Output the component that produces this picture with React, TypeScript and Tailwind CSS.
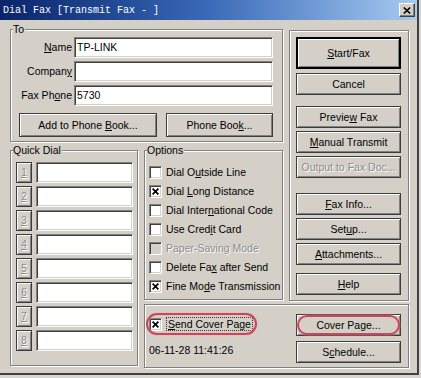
import React from 'react';

type Kids = { children?: React.ReactNode };

function U({ children }: Kids) {
  return <span className="underline underline-offset-[1px] decoration-1">{children}</span>;
}

function Button({
  children,
  className = '',
  disabled = false,
  isDefault = false,
}: Kids & { className?: string; disabled?: boolean; isDefault?: boolean }) {
  return (
    <button
      type="button"
      className={`flex items-center justify-center bg-[#d4d0c8] leading-none shadow-[inset_1px_1px_0_#fff,inset_-1px_-1px_0_#808080] ${
        isDefault ? 'border-2 border-black' : 'border border-[#3c3c3c]'
      } ${disabled ? 'text-[#8a8a8a] [text-shadow:1px_1px_0_#fff]' : 'text-black'} ${className}`}
    >
      <span className="whitespace-pre">{children}</span>
    </button>
  );
}

function Field({ value = '', className = '' }: { value?: string; className?: string }) {
  return (
    <div
      className={`flex h-[21px] items-center bg-white pl-[2px] border border-t-[#808080] border-l-[#808080] border-b-white border-r-white shadow-[inset_1px_1px_0_#404040,inset_-1px_-1px_0_#d4d0c8] ${className}`}
    >
      {value}
    </div>
  );
}

function Group({ label, className = '', children }: Kids & { label?: string; className?: string }) {
  return (
    <div className={`relative border border-[#808080] shadow-[inset_1px_1px_0_#fff,1px_1px_0_#fff] ${className}`}>
      {label && (
        <span className="absolute -top-[7px] left-[2px] bg-[#d4d0c8] pr-px leading-[13px]">{label}</span>
      )}
      {children}
    </div>
  );
}

function Check({ checked = false, disabled = false }: { checked?: boolean; disabled?: boolean }) {
  return (
    <span
      className={`flex h-[13px] w-[13px] shrink-0 items-center justify-center border border-t-[#808080] border-l-[#808080] border-b-white border-r-white shadow-[inset_1px_1px_0_#404040,inset_-1px_-1px_0_#d4d0c8] ${
        disabled ? 'bg-[#d4d0c8]' : 'bg-white'
      }`}
    >
      {checked && (
        <svg width="7" height="7" viewBox="0 0 7 7">
          <path d="M0.6 0.6L6.4 6.4M6.4 0.6L0.6 6.4" stroke="black" strokeWidth="1.7" />
        </svg>
      )}
    </span>
  );
}

const options: { label: React.ReactNode; checked?: boolean; disabled?: boolean }[] = [
  { label: <>Dial O<U>u</U>tside Line</> },
  { label: <>Dial <U>L</U>ong Distance</>, checked: true },
  { label: <>Dial Inter<U>n</U>ational Code</> },
  { label: <>Use Cred<U>i</U>t Card</> },
  { label: <>Paper-Saving Mode</>, disabled: true },
  { label: <>Delete Fa<U>x</U> after Send</> },
  { label: <>Fine Mo<U>d</U>e Transmission</>, checked: true },
];

export default function App() {
  return (
    <div className="h-[378px] w-[421px] bg-[#d8d6d2] font-['Liberation_Sans',Arial,sans-serif] text-[10.5px] leading-[13px] text-black">
      <div className="flex h-[375px] w-[419px] flex-col border-r-2 border-b-2 border-[#404040] bg-[#d4d0c8]">
        {/* title bar */}
        <div className="flex h-[20px] shrink-0 items-center bg-linear-to-r from-[#0a246a] via-[#3a6ab8] to-[#a6caf0] pl-[3px] pr-[2px]">
          <span className="font-['Liberation_Mono',monospace] text-[10px] text-white">Dial Fax [Transmit Fax - ]</span>
          <button
            type="button"
            className="ml-auto flex h-[14px] w-[16px] items-center justify-center bg-[#d4d0c8] border border-t-white border-l-white border-b-[#404040] border-r-[#404040] shadow-[inset_-1px_-1px_0_#808080]"
          >
            <svg width="8" height="7" viewBox="0 0 8 7">
              <path d="M0.8 0.5L7.2 6.5M7.2 0.5L0.8 6.5" stroke="black" strokeWidth="1.6" />
            </svg>
          </button>
        </div>

        <div className="grid grid-cols-[128px_139px_120px] grid-rows-[113px_158px_68px] gap-x-[6px] pl-[10px] pt-[9px]">
          {/* To */}
          <Group label="To" className="col-span-2 col-start-1 row-start-1">
            <div className="flex flex-col gap-[3px] pt-[7px]">
              {[
                { label: <><U>N</U>ame</>, value: 'TP-LINK' },
                { label: <>Compan<U>y</U></>, value: '' },
                { label: <>Fax Ph<U>o</U>ne</>, value: '5730' },
              ].map((r, i) => (
                <div key={i} className="flex h-[21px] items-center">
                  <span className="w-[61px] text-right">{r.label}</span>
                  <Field value={r.value} className="ml-[2px] w-[199px]" />
                </div>
              ))}
              <div className="mt-[4px] flex gap-[9px] pl-[8px]">
                <Button className="h-[24px] w-[138px]">
                  Add to Phone <U>B</U>ook...
                </Button>
                <Button className="h-[24px] w-[107px]">
                  Phone Boo<U>k</U>...
                </Button>
              </div>
            </div>
          </Group>

          {/* right buttons */}
          <Group className="col-start-3 row-span-2 row-start-1 mt-px h-[271px]">
            <div className="flex flex-col pl-[6px] pt-[6px]">
              <Button isDefault className="h-[32px] w-[105px]">
                <U>S</U>tart/Fax
              </Button>
              <Button className="mt-[4px] h-[22px] w-[105px]">Cancel</Button>
              <Button className="mt-[11px] h-[22px] w-[105px]">
                Previe<U>w</U> Fax
              </Button>
              <Button className="mt-[3px] h-[22px] w-[105px]">
                <U>M</U>anual Transmit
              </Button>
              <Button disabled className="mt-[3px] h-[22px] w-[105px]">
                Output to Fax Doc...
              </Button>
              <Button className="mt-[15px] h-[22px] w-[105px]">
                <U>F</U>ax Info...
              </Button>
              <Button className="mt-[3px] h-[22px] w-[105px]">
                Set<U>u</U>p...
              </Button>
              <Button className="mt-[3px] h-[22px] w-[105px]">
                <U>A</U>ttachments...
              </Button>
              <Button className="mt-[8px] h-[22px] w-[105px]">
                <U>H</U>elp
              </Button>
            </div>
          </Group>

          {/* quick dial */}
          <Group label="Quick Dial" className="col-start-1 row-span-2 row-start-2 mt-[8px] h-[216px]">
            <div className="flex flex-col gap-[3px] pl-[5px] pt-[11px]">
              {[1, 2, 3, 4, 5, 6, 7, 8].map((n) => (
                <div key={n} className="flex h-[21px] gap-[4px]">
                  <Button disabled className="h-[21px] w-[16px] text-[10px]">
                    <U>{n}</U>
                  </Button>
                  <Field className="w-[97px]" />
                </div>
              ))}
            </div>
          </Group>

          {/* options */}
          <Group label="Options" className="col-start-2 row-start-2 mt-[8px] h-[150px]">
            <div className="flex flex-col pl-[4px] pt-[12px]">
              {options.map((o, i) => (
                <div key={i} className="flex h-[19px] items-center gap-[4px]">
                  <Check checked={o.checked} disabled={o.disabled} />
                  <span className={o.disabled ? 'whitespace-nowrap text-[#8a8a8a] [text-shadow:1px_1px_0_#fff]' : 'whitespace-nowrap'}>
                    {o.label}
                  </span>
                </div>
              ))}
            </div>
          </Group>

          {/* bottom */}
          <Group className="col-span-2 col-start-2 row-start-3 mt-[4px] h-[64px]">
            <div className="flex">
              <div className="flex flex-col pl-[4px] pt-[8px]">
                <div className="relative flex h-[22px] items-center gap-[4px] pr-[4px]">
                  <Check checked />
                  <span className="border border-dotted border-[#333] px-px leading-[12px]">
                    <U>S</U>end Cover Page
                  </span>
                  <span className="pointer-events-none absolute inset-y-0 -left-[3px] right-0 rounded-full border-2 border-[#c9475c] shadow-[0_0_2px_#f2a2b2,inset_0_0_2px_#f2a2b2]" />
                </div>
                <span className="mt-[9px]">06-11-28 11:41:26</span>
              </div>
              <div className="ml-auto flex flex-col gap-[5px] pr-[7px] pt-[9px]">
                <div className="relative">
                  <Button className="h-[22px] w-[105px]">Cover Page...</Button>
                  <span className="pointer-events-none absolute inset-[1px] rounded-full border-2 border-[#c9475c] shadow-[0_0_2px_#f2a2b2]" />
                </div>
                <Button className="h-[22px] w-[105px]">
                  S<U>c</U>hedule...
                </Button>
              </div>
            </div>
          </Group>
        </div>
      </div>
    </div>
  );
}
